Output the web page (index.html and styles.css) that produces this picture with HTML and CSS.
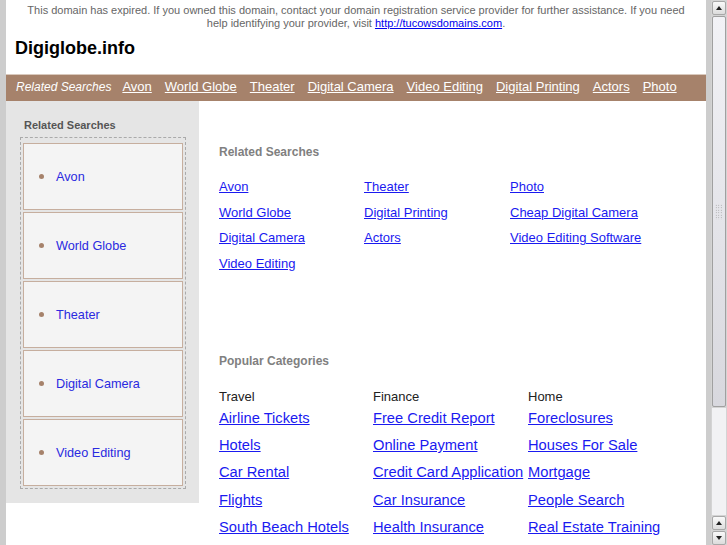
FILE: index.html
```html
<!DOCTYPE html>
<html lang="en">
<head>
    <meta charset="UTF-8">
    <title>Digiglobe.info</title>
    <link rel="stylesheet" href="styles.css">
</head>
<body>
    <div class="page">
        <p class="notice">This domain has expired. If you owned this domain, contact your domain registration service provider for further assistance. If you need help identifying your provider, visit <a href="#">http://tucowsdomains.com</a>.</p>
        <h1 class="site-title">Digiglobe.info</h1>

        <div class="topnav">
            <span class="topnav-label">Related Searches</span>
            <a href="#">Avon</a>
            <a href="#">World Globe</a>
            <a href="#">Theater</a>
            <a href="#">Digital Camera</a>
            <a href="#">Video Editing</a>
            <a href="#">Digital Printing</a>
            <a href="#">Actors</a>
            <a href="#">Photo</a>
        </div>

        <div class="content">
            <div class="sidebar">
                <h3>Related Searches</h3>
                <ul class="side-list">
                    <li><a href="#">Avon</a></li>
                    <li><a href="#">World Globe</a></li>
                    <li><a href="#">Theater</a></li>
                    <li><a href="#">Digital Camera</a></li>
                    <li><a href="#">Video Editing</a></li>
                </ul>
            </div>

            <div class="main">
                <h2>Related Searches</h2>
                <div class="related-grid">
                    <a href="#">Avon</a>
                    <a href="#">Theater</a>
                    <a href="#">Photo</a>
                    <a href="#">World Globe</a>
                    <a href="#">Digital Printing</a>
                    <a href="#">Cheap Digital Camera</a>
                    <a href="#">Digital Camera</a>
                    <a href="#">Actors</a>
                    <a href="#">Video Editing Software</a>
                    <a href="#">Video Editing</a>
                </div>

                <h2 class="popular-title">Popular Categories</h2>
                <div class="popular-grid">
                    <div class="category">
                        <div class="category-name">Travel</div>
                        <a href="#">Airline Tickets</a>
                        <a href="#">Hotels</a>
                        <a href="#">Car Rental</a>
                        <a href="#">Flights</a>
                        <a href="#">South Beach Hotels</a>
                    </div>
                    <div class="category">
                        <div class="category-name">Finance</div>
                        <a href="#">Free Credit Report</a>
                        <a href="#">Online Payment</a>
                        <a href="#">Credit Card Application</a>
                        <a href="#">Car Insurance</a>
                        <a href="#">Health Insurance</a>
                    </div>
                    <div class="category">
                        <div class="category-name">Home</div>
                        <a href="#">Foreclosures</a>
                        <a href="#">Houses For Sale</a>
                        <a href="#">Mortgage</a>
                        <a href="#">People Search</a>
                        <a href="#">Real Estate Training</a>
                    </div>
                </div>
            </div>
        </div>
    </div>

    <div class="scrollbar">
        <div class="sb-btn up"></div>
        <div class="sb-thumb"><span class="grip"></span></div>
        <div class="sb-track"></div>
        <div class="sb-btn up"></div>
        <div class="sb-btn down"></div>
    </div>
</body>
</html>
```

FILE: styles.css
```css
html, body {
    margin: 0;
    height: 545px;
    overflow: hidden;
}
body {
    display: flex;
    background-color: #cdcdcd;
    font-family: 'Liberation Sans', Arial, sans-serif;
}
.page {
    width: 700px;
    margin-left: 6px;
    margin-right: 5px;
    background-color: #fff;
}
.notice {
    margin: 0;
    padding: 4px 16px 0;
    font-size: 11px;
    line-height: 13px;
    color: #666;
    text-align: center;
}
.notice a {
    color: #0000ee;
}
.site-title {
    margin: 7px 0 0 9px;
    font-size: 18px;
    line-height: 22px;
    color: #000;
}
.topnav {
    margin-top: 15px;
    border-top: 1px solid #d9c9bd;
    background-color: #a6826b;
    height: 23px;
    padding: 0 0 3px 10px;
    display: flex;
    align-items: center;
    font-size: 13px;
    color: #fff;
}
.topnav-label {
    font-style: italic;
    font-size: 12px;
    margin-right: 11px;
}
.topnav a {
    color: #fff;
    margin-right: 13px;
}
.content {
    display: flex;
    align-items: flex-start;
}
.sidebar {
    width: 166px;
    background-color: #e5e5e5;
    padding: 17px 13px 14px 14px;
}
.sidebar h3 {
    margin: 0 0 5px 4px;
    font-size: 11px;
    line-height: 14px;
    color: #555;
}
.side-list {
    list-style: none;
    margin: 0;
    padding: 5px 2px 2px;
    border: 1px dashed #aaa;
    display: flex;
    flex-direction: column;
    gap: 2px;
}
.side-list li {
    height: 65px;
    display: flex;
    align-items: center;
    padding-left: 15px;
    background-color: #f4f4f4;
    border: 1px solid #c6ae9e;
    font-size: 12.7px;
}
.side-list li::before {
    content: "";
    width: 5px;
    height: 5px;
    border-radius: 50%;
    background-color: #a6826b;
    margin-right: 12px;
}
.side-list a {
    color: #2a2ae0;
    text-decoration: none;
}
.main {
    flex: 1;
    padding: 43px 20px 0;
}
.main h2 {
    margin: 0;
    font-size: 12px;
    line-height: 16px;
    color: #808080;
}
.related-grid {
    display: grid;
    grid-template-columns: 145px 146px 150px;
    grid-auto-rows: 25.5px;
    margin-top: 19px;
    font-size: 13px;
    line-height: 16px;
}
.related-grid a {
    color: #1a1af0;
}
.popular-title {
    margin-top: 72px !important;
}
.popular-grid {
    display: grid;
    grid-template-columns: 154px 155px 155px;
    margin-top: 20px;
}
.category {
    display: flex;
    flex-direction: column;
}
.category-name {
    font-size: 13px;
    line-height: 16px;
    color: #222;
}
.category a {
    font-size: 14.7px;
    line-height: 27.2px;
    color: #1a1af0;
    white-space: nowrap;
}
.scrollbar {
    width: 16px;
    display: flex;
    flex-direction: column;
    background-color: #d4d4d4;
}
.sb-btn {
    height: 14px;
    margin: 1px 1px 0;
    border: 1px solid #a8a8a8;
    border-radius: 2px;
    background: linear-gradient(#fafafa, #dcdcdc);
    box-sizing: border-box;
    display: flex;
    align-items: center;
    justify-content: center;
}
.sb-btn::after {
    content: "";
    border-left: 3px solid transparent;
    border-right: 3px solid transparent;
}
.sb-btn.up::after {
    border-bottom: 4px solid #222;
}
.sb-btn.down::after {
    border-top: 4px solid #222;
}
.sb-thumb {
    height: 391px;
    margin: 1px 1px 0;
    border: 1px solid #a0a0a0;
    border-radius: 2px;
    background: linear-gradient(#f2f2f6, #d8d8de);
    box-sizing: border-box;
    display: flex;
    align-items: center;
    justify-content: center;
}
.grip {
    width: 8px;
    height: 16px;
    background-image: radial-gradient(#9a9a9a 0.6px, transparent 0.8px);
    background-size: 2.5px 2.5px;
}
.sb-track {
    flex: 1;
    margin: 1px 1px 0;
    background-color: #f2f2f4;
}
```
